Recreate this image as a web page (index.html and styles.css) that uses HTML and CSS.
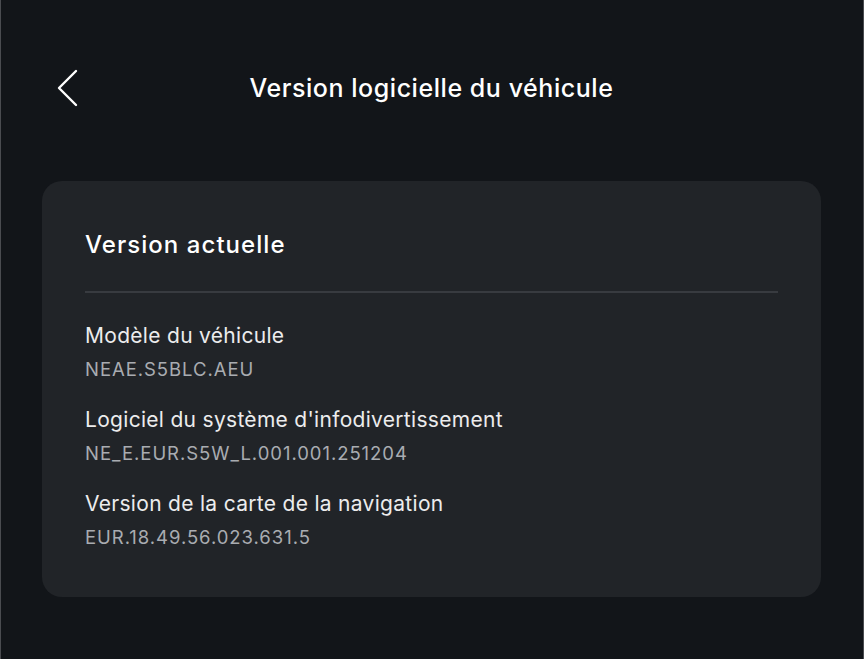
FILE: index.html
```html
<!DOCTYPE html>
<html lang="fr">
<head>
    <meta charset="UTF-8">
    <meta name="viewport" content="width=device-width, initial-scale=1.0">
    <title>Version logicielle du véhicule</title>
    <link rel="stylesheet" href="styles.css">
</head>
<body>

<div class="screen">
    <div class="header">
        <button class="back-btn" aria-label="Retour">
            <svg width="24" height="40" viewBox="0 0 24 40">
                <path d="M20 3 L3 20 L20 37" fill="none" stroke="#fff" stroke-width="2.4" stroke-linecap="round" stroke-linejoin="round"/>
            </svg>
        </button>
        <h1 class="title">Version logicielle du véhicule</h1>
    </div>

    <div class="card">
        <h2 class="card-title">Version actuelle</h2>
        <div class="divider"></div>
        <div class="info">
            <div class="label">Modèle du véhicule</div>
            <div class="value">NEAE.S5BLC.AEU</div>
        </div>
        <div class="info">
            <div class="label">Logiciel du système d'infodivertissement</div>
            <div class="value">NE_E.EUR.S5W_L.001.001.251204</div>
        </div>
        <div class="info">
            <div class="label">Version de la carte de la navigation</div>
            <div class="value">EUR.18.49.56.023.631.5</div>
        </div>
    </div>
</div>

</body>
</html>
```

FILE: styles.css
```css
body, html {
    margin: 0;
    height: 100%;
    background: #121519;
    color: #fff;
    font-family: Inter, "Noto Sans", sans-serif;
}
body {
    border-left: 1px solid #4a4c50;
    border-right: 1px solid #4a4c50;
    box-sizing: border-box;
}
.screen {
    padding: 0 42px 0 41px;
}
.header {
    position: relative;
    height: 181px;
    display: flex;
    justify-content: center;
}
.back-btn {
    position: absolute;
    left: 14px;
    top: 68px;
    padding: 0;
    background: none;
    border: none;
    cursor: pointer;
}
.title {
    margin: 0;
    padding-top: 70px;
    font-size: 25px;
    font-weight: 500;
    letter-spacing: 0.55px;
    line-height: 36px;
}
.card {
    background: #212428;
    border-radius: 20px;
    padding: 43px 43px 43px 43px;
    height: 416px;
    box-sizing: border-box;
}
.card-title {
    margin: 0;
    font-size: 24px;
    font-weight: 500;
    letter-spacing: 1.05px;
    line-height: 34px;
    padding-top: 4px;
}
.divider {
    height: 2px;
    background: #383b40;
    margin: 29px 0 26px;
}
.info {
    margin-bottom: 18px;
}
.label {
    font-size: 21px;
    letter-spacing: 0.3px;
    line-height: 34px;
    color: #ececed;
}
.value {
    font-size: 18.5px;
    letter-spacing: 0.95px;
    line-height: 32px;
    color: #a9acb1;
}
```
